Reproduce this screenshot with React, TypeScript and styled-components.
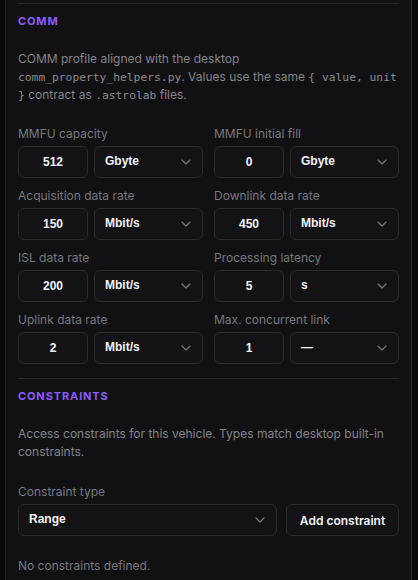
import React from "react";
import styled, { createGlobalStyle } from "styled-components";
import { ChevronDown } from "lucide-react";

const Global = createGlobalStyle`
  html, body { margin: 0; padding: 0; background: #0a0a0c; }
  body { font-family: Inter, "Noto Sans", sans-serif; -webkit-font-smoothing: antialiased; }
`;

const Page = styled.div`
  width: 418px;
  height: 580px;
  overflow: hidden;
  background: #0a0a0c;
  display: flex;
`;

const Panel = styled.div`
  margin-left: 5px;
  width: 407px;
  height: 580px;
  background: #111114;
  border-left: 1px solid #1f1f23;
  border-right: 1px solid #2a2a2f;
  padding: 0 12px;
  box-sizing: border-box;
  display: flex;
  flex-direction: column;
  flex: none;
`;

const Divider = styled.div<{ $top: number }>`
  height: 1px;
  background: #26262b;
  margin-top: ${(p) => p.$top}px;
`;

const Heading = styled.div`
  margin-top: 9px;
  height: 16px;
  line-height: 16px;
  font-size: 11px;
  font-weight: 700;
  letter-spacing: 0.08em;
  color: #8b5cf6;
`;

const Desc = styled.p`
  margin: 21px 0 0;
  font-size: 12px;
  line-height: 18px;
  color: #838389;
`;

const Code = styled.code`
  font-family: "DejaVu Sans Mono", "Liberation Mono", monospace;
  font-size: 11.3px;
  line-height: 1;
  color: #8a8a90;
`;

const Grid = styled.div`
  margin-top: 21px;
  display: grid;
  grid-template-columns: 1fr 1fr;
  column-gap: 11px;
  row-gap: 9px;
`;

const Field = styled.div`
  display: flex;
  flex-direction: column;
  gap: 5px;
`;

const Label = styled.div`
  height: 16px;
  line-height: 17px;
  font-size: 12px;
  color: #77777d;
  white-space: nowrap;
`;

const Pair = styled.div`
  display: flex;
  gap: 6px;
`;

const Box = styled.div`
  height: 32px;
  box-sizing: border-box;
  border: 1px solid #29292e;
  border-radius: 6px;
  background: #131316;
  color: #f2f2f4;
  font-size: 12px;
  font-weight: 600;
  display: flex;
  align-items: center;
`;

const NumBox = styled(Box)`
  width: 70px;
  flex: none;
  justify-content: center;
  font-family: "Liberation Sans", Arial, sans-serif;
  font-weight: 700;
`;

const SelectBox = styled(Box)`
  flex: 1;
  justify-content: space-between;
  padding: 0 8px 0 10px;
  font-family: "Liberation Sans", Arial, sans-serif;
  font-weight: 700;
  span { position: relative; top: -1px; }
  svg { color: #77777d; }
`;

const ConstraintRow = styled.div`
  margin-top: 22px;
  display: flex;
  flex-direction: column;
  gap: 5px;
`;

const Row = styled.div`
  display: flex;
  gap: 9px;
`;

const Button = styled(Box)`
  width: 113px;
  flex: none;
  justify-content: center;
  font-weight: 600;
`;

const Empty = styled.div`
  margin-top: 22px;
  height: 16px;
  line-height: 16px;
  font-size: 12px;
  color: #77777d;
`;

const fields = [
  { label: "MMFU capacity", value: "512", unit: "Gbyte" },
  { label: "MMFU initial fill", value: "0", unit: "Gbyte" },
  { label: "Acquisition data rate", value: "150", unit: "Mbit/s" },
  { label: "Downlink data rate", value: "450", unit: "Mbit/s" },
  { label: "ISL data rate", value: "200", unit: "Mbit/s" },
  { label: "Processing latency", value: "5", unit: "s" },
  { label: "Uplink data rate", value: "2", unit: "Mbit/s" },
  { label: "Max. concurrent link", value: "1", unit: "—" },
];

export default function App() {
  return (
    <Page>
      <Global />
      <Panel>
        <Divider $top={3} />
        <Heading>COMM</Heading>
        <Desc>
          COMM profile aligned with the desktop <Code>comm_property_helpers.py</Code>. Values use the
          same <Code>{"{ value, unit }"}</Code> contract as <Code>.astrolab</Code> files.
        </Desc>
        <Grid>
          {fields.map((f) => (
            <Field key={f.label}>
              <Label>{f.label}</Label>
              <Pair>
                <NumBox>{f.value}</NumBox>
                <SelectBox>
                  <span>{f.unit}</span>
                  <ChevronDown size={16} strokeWidth={1.75} />
                </SelectBox>
              </Pair>
            </Field>
          ))}
        </Grid>
        <Divider $top={14} />
        <Heading>CONSTRAINTS</Heading>
        <Desc>
          Access constraints for this vehicle. Types match desktop built-in constraints.
        </Desc>
        <ConstraintRow>
          <Label>Constraint type</Label>
          <Row>
            <SelectBox>
              <span>Range</span>
              <ChevronDown size={16} strokeWidth={1.75} />
            </SelectBox>
            <Button>Add constraint</Button>
          </Row>
        </ConstraintRow>
        <Empty>No constraints defined.</Empty>
      </Panel>
    </Page>
  );
}
